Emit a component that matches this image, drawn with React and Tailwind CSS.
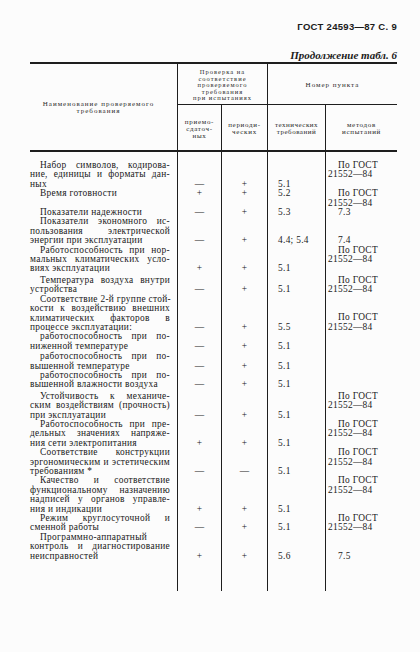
import React from 'react';

const GOST = ['По ГОСТ', '21552—84'];
const LH = 9.4;

const rows = [
  { name: ['Набор символов, кодирова-', 'ние, единицы и форматы дан-', 'ных'], a: '—', b: '+', p: '5.1', m: GOST, top: true, pt: 'pt-[9px]' },
  { name: ['Время готовности'], a: '+', b: '+', p: '5.2', m: GOST, top: true, pt: 'pt-0' },
  { name: ['Показатели надежности'], a: '—', b: '+', p: '5.3', m: ['7.3'], top: false, pt: 'pt-0' },
  { name: ['Показатели экономного ис-', 'пользования электрической', 'энергии при эксплуатации'], a: '—', b: '+', p: '4.4; 5.4', m: ['7.4'], top: false, pt: 'pt-0' },
  { name: ['Работоспособность при нор-', 'мальных климатических усло-', 'виях эксплуатации'], a: '+', b: '+', p: '5.1', m: GOST, top: true, pt: 'pt-0' },
  { name: ['Температура воздуха внутри', 'устройства'], a: '—', b: '+', p: '5.1', m: GOST, top: true, pt: 'pt-[2px]' },
  { name: ['Соответствие 2-й группе стой-', 'кости к воздействию внешних', 'климатических факторов в', 'процессе эксплуатации:'], a: '—', b: '+', p: '5.5', m: GOST, top: false, pt: 'pt-0' },
  { name: ['работоспособность при по-', 'ниженной температуре'], a: '—', b: '+', p: '5.1', m: [], top: false, pt: 'pt-0' },
  { name: ['работоспособность при по-', 'вышенной температуре'], a: '—', b: '+', p: '5.1', m: [], top: false, pt: 'pt-[1px]' },
  { name: ['работоспособность при по-', 'вышенной влажности воздуха'], a: '—', b: '+', p: '5.1', m: [], top: false, pt: 'pt-0' },
  { name: ['Устойчивость к механиче-', 'ским воздействиям (прочность)', 'при эксплуатации'], a: '—', b: '+', p: '5.1', m: GOST, top: true, pt: 'pt-[2px]' },
  { name: ['Работоспособность при пре-', 'дельных значениях напряже-', 'ния сети электропитания'], a: '+', b: '+', p: '5.1', m: GOST, top: true, pt: 'pt-0' },
  { name: ['Соответствие конструкции', 'эргономическим и эстетическим', 'требованиям *'], a: '—', b: '—', p: '5.1', m: GOST, top: true, pt: 'pt-0' },
  { name: ['Качество и соответствие', 'функциональному назначению', 'надписей у органов управле-', 'ния и индикации'], a: '+', b: '+', p: '5.1', m: GOST, top: true, pt: 'pt-0' },
  { name: ['Режим круглосуточной и', 'сменной работы'], a: '—', b: '+', p: '5.1', m: GOST, top: true, pt: 'pt-0' },
  { name: ['Программно-аппаратный', 'контроль и диагностирование', 'неисправностей'], a: '+', b: '+', p: '5.6', m: ['7.5'], top: false, pt: 'pt-0' },
];

const cols = 'grid grid-cols-[147px_44px_46px_58px_72px]';

function Row({ row }) {
  // values sit on the last line of the name
  const lastLine = (row.name.length - 1) * LH;
  const mOffset = row.top ? 0 : Math.max(0, (row.name.length - row.m.length) * LH);
  return (
    <div className={cols}>
      <div className={`${row.pt} pr-[7px]`}>
        {row.name.map((line, i) => {
          const last = i === row.name.length - 1;
          return (
            <div
              key={i}
              className={`${i === 0 ? 'indent-[10px]' : ''} ${last ? 'text-left' : 'text-justify [text-align-last:justify]'} whitespace-nowrap`}
            >
              {line}
            </div>
          );
        })}
      </div>
      <div className={`${row.pt} border-l border-[#1e1e1e] text-center`}>
        <div style={{ paddingTop: lastLine }}>{row.a}</div>
      </div>
      <div className={`${row.pt} border-l border-[#1e1e1e] text-center`}>
        <div style={{ paddingTop: lastLine }}>{row.b}</div>
      </div>
      <div className={`${row.pt} border-l border-[#1e1e1e] pl-[10px]`}>
        <div style={{ paddingTop: lastLine }}>{row.p}</div>
      </div>
      <div className={`${row.pt} border-l border-[#1e1e1e] pl-[2px]`}>
        <div style={{ paddingTop: mOffset }}>
          {row.m.map((line, i) => (
            <div key={i} className={i === 0 ? 'pl-[10px]' : ''}>{line}</div>
          ))}
        </div>
      </div>
    </div>
  );
}

function TableHead() {
  return (
    <div className={`${cols} grid-rows-[41px_45px] border-t-2 border-b-2 border-[#1e1e1e] text-[7px] leading-[7px] tracking-[1px] text-[#2a2a2a]`}>
      <div className="row-span-2 flex items-center justify-center pr-[10px] pt-[2px] text-center">
        <div>
          <div>Наименование проверяемого</div>
          <div>требования</div>
        </div>
      </div>
      <div className="col-span-2 border-l border-b border-[#1e1e1e] flex items-center justify-center text-center text-[6.5px] leading-[6.5px] tracking-[1px] pt-[3px]">
        <div>
          <div>Проверка на</div>
          <div>соответствие</div>
          <div>проверяемого</div>
          <div>требования</div>
          <div>при испытаниях</div>
        </div>
      </div>
      <div className="col-span-2 border-l border-b border-[#1e1e1e] flex items-center justify-center pt-[3px]">
        Номер пункта
      </div>
      <div className="border-l border-[#1e1e1e] flex items-center justify-center text-center pt-[3px] tracking-[0.7px]">
        <div>
          <div>приемо-</div>
          <div>сдаточ-</div>
          <div>ных</div>
        </div>
      </div>
      <div className="border-l border-[#1e1e1e] flex items-center justify-center text-center pt-[3px] tracking-[0.7px]">
        <div>
          <div>периоди-</div>
          <div>ческих</div>
        </div>
      </div>
      <div className="border-l border-[#1e1e1e] flex items-center justify-center text-center pt-[3px] tracking-[0.5px]">
        <div>
          <div>технических</div>
          <div>требований</div>
        </div>
      </div>
      <div className="border-l border-[#1e1e1e] flex items-center justify-center text-center pt-[3px] tracking-[0.7px]">
        <div>
          <div>методов</div>
          <div>испытаний</div>
        </div>
      </div>
    </div>
  );
}

export default function App() {
  return (
    <div className="w-[420px] h-[652px] bg-[#fcfcfc] text-[#1a1a1a] font-['Liberation_Serif',serif] overflow-hidden">
      <div className="ml-[30px] w-[367px] pt-[21px]">
        <div className="h-[12px] leading-[12px] text-right font-['Liberation_Sans',sans-serif] font-bold text-[9.5px] tracking-[0.3px]">
          ГОСТ 24593—87 С. 9
        </div>
        <div className="mt-[15px] h-[14px] leading-[14px] text-right italic font-semibold text-[11px]">
          Продолжение табл. 6
        </div>
        <TableHead />
        <div className="text-[9.4px] leading-[9.4px] tracking-[0.3px]">
          {rows.map((row, i) => (
            <Row key={i} row={row} />
          ))}
          <div className={`${cols} h-[30px]`}>
            <div />
            <div className="border-l border-[#1e1e1e]" />
            <div className="border-l border-[#1e1e1e]" />
            <div className="border-l border-[#1e1e1e]" />
            <div className="border-l border-[#1e1e1e]" />
          </div>
        </div>
      </div>
    </div>
  );
}
